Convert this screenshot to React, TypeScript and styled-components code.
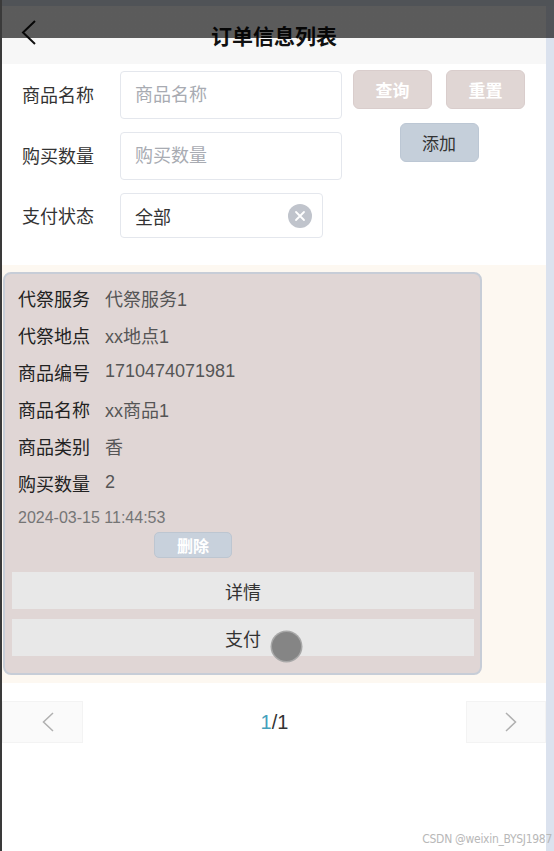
import React from "react";
import styled, { createGlobalStyle } from "styled-components";

const GlobalStyle = createGlobalStyle`
  html, body {
    margin: 0;
    padding: 0;
    background: #ffffff;
    overflow: hidden;
  }
  body {
    font-family: "Liberation Sans", "Noto Sans CJK SC", sans-serif;
    color: #333;
  }
  * { box-sizing: border-box; }
`;

const Frame = styled.div`
  position: relative;
  display: flex;
  width: 554px;
  height: 851px;
  border-left: 2px solid #3a3a3a;
`;

const Page = styled.div`
  flex: 1;
  display: flex;
  flex-direction: column;
  background: #ffffff;
`;

const SideStrip = styled.div`
  width: 8px;
  background: #dbe2ee;
`;

const TopShade = styled.div`
  position: absolute;
  left: 0;
  top: 0;
  width: 554px;
  height: 38px;
  background: linear-gradient(#505357 0, #505357 6px, rgba(0, 0, 0, 0.63) 6px);
  pointer-events: none;
  z-index: 5;
`;

const Header = styled.header`
  display: grid;
  grid-template-columns: 60px 1fr 60px;
  height: 64px;
  background: #f7f7f7;
`;

const BackButton = styled.button`
  border: 0;
  background: none;
  padding: 20px 0 0 19px;
  margin: 0;
  display: flex;
  align-items: flex-start;
  cursor: pointer;
`;

const Title = styled.h1`
  margin: 0;
  padding-top: 25px;
  text-align: center;
  font-size: 21px;
  line-height: 24px;
  font-weight: 700;
  color: #111;
`;

const Form = styled.section`
  display: flex;
  align-items: flex-start;
  padding: 6px 0 27px 20px;
`;

const Fields = styled.div`
  display: flex;
  flex-direction: column;
  gap: 13px;
`;

const FieldRow = styled.div<{ $top?: number }>`
  display: flex;
  align-items: center;
  padding-top: ${(p) => p.$top ?? 0}px;
`;

const FieldLabel = styled.label`
  width: 98px;
  font-size: 18px;
  color: #333;
  margin-top: -2px;
`;

const TextInput = styled.input`
  width: 222px;
  height: 48px;
  border: 1px solid #e4e7ed;
  border-radius: 4px;
  padding: 0 14px;
  font-size: 18px;
  font-family: "Liberation Sans", "Noto Sans CJK SC", sans-serif;
  color: #333;
  background: #fff;
  outline: none;
  &::placeholder {
    color: #a8abb2;
  }
`;

const SelectBox = styled.div`
  width: 203px;
  height: 45px;
  border: 1px solid #e4e7ed;
  border-radius: 4px;
  display: flex;
  align-items: center;
  justify-content: space-between;
  padding: 0 10px 0 14px;
  font-size: 18px;
  color: #333;
  background: #fff;
`;

const ClearIcon = styled.span`
  width: 24px;
  height: 24px;
  border-radius: 50%;
  background: #c0c4cc;
  display: flex;
  align-items: center;
  justify-content: center;
  margin-top: 1px;
`;

const Actions = styled.div`
  margin-left: 11px;
  display: flex;
  flex-direction: column;
  align-items: center;
  gap: 14px;
`;

const ActionPair = styled.div`
  display: flex;
  gap: 14px;
`;

const ActionButton = styled.button<{ $variant: "rose" | "blue" }>`
  width: 79px;
  height: 39px;
  border-radius: 6px;
  border: 1px solid ${(p) => (p.$variant === "rose" ? "#d9cdcc" : "#bcc7d4")};
  background: ${(p) => (p.$variant === "rose" ? "#e0d6d4" : "#c5cfda")};
  color: ${(p) => (p.$variant === "rose" ? "#ffffff" : "#333333")};
  font-size: 17px;
  font-weight: ${(p) => (p.$variant === "rose" ? 600 : 400)};
  font-family: "Liberation Sans", "Noto Sans CJK SC", sans-serif;
  padding: 0;
  cursor: pointer;
`;

const ListArea = styled.section`
  background: #fdf8f1;
  padding: 7px 0 8px 1px;
`;

const Card = styled.article`
  width: 479px;
  background: #e0d6d5;
  border: 2px solid #c7cdd7;
  border-radius: 8px;
  padding: 5px 6px 17px 7px;
  display: flex;
  flex-direction: column;
`;

const InfoRow = styled.div`
  display: flex;
  align-items: center;
  height: 37px;
  padding-left: 6px;
  font-size: 18px;
`;

const InfoLabel = styled.span`
  width: 72px;
  margin-right: 15px;
  color: #222;
  white-space: nowrap;
`;

const InfoValue = styled.span`
  color: #555;
`;

const DateLine = styled.div`
  height: 26px;
  margin-top: 4px;
  line-height: 26px;
  padding-left: 6px;
  font-size: 16px;
  color: #757575;
`;

const DeleteRow = styled.div`
  display: flex;
  padding-left: 142px;
  margin-top: 1px;
`;

const DeleteButton = styled.button`
  width: 78px;
  height: 26px;
  border-radius: 5px;
  border: 1px solid #bdc6d1;
  background: #c8d1dc;
  color: #fff;
  font-size: 16px;
  font-weight: 600;
  font-family: "Liberation Sans", "Noto Sans CJK SC", sans-serif;
  padding: 0;
`;

const WideButton = styled.button<{ $gap: number }>`
  margin-top: ${(p) => p.$gap}px;
  height: 37px;
  width: 100%;
  border: 0;
  background: #e8e8e8;
  color: #333;
  font-size: 18px;
  font-family: "Liberation Sans", "Noto Sans CJK SC", sans-serif;
  padding: 0;
`;

const Pager = styled.nav`
  margin-top: 18px;
  display: flex;
  align-items: center;
  justify-content: space-between;
  height: 42px;
`;

const PageButton = styled.button<{ $w: number }>`
  width: ${(p) => p.$w}px;
  height: 42px;
  border: 1px solid #f3f3f3;
  background: #fafafa;
  display: flex;
  align-items: center;
  justify-content: center;
  padding: 0 0 0 10px;
`;

const PageCount = styled.div`
  font-size: 20px;
  color: #333;
  font-family: "Liberation Sans", sans-serif;
`;

const Current = styled.span`
  color: #45a0bc;
`;

const Watermark = styled.div`
  position: absolute;
  right: 2px;
  bottom: 5px;
  font-size: 12px;
  color: #b8b8b8;
  font-family: "DejaVu Sans Condensed", "Liberation Sans", sans-serif;
  letter-spacing: -0.3px;
`;

const TouchDot = styled.div`
  position: absolute;
  left: 270px;
  top: 632px;
  width: 29px;
  height: 29px;
  border-radius: 50%;
  background: #858585;
  box-shadow: 0 0 0 1.5px #a8a8a8;
  z-index: 4;
`;

const info: [string, string][] = [
  ["代祭服务", "代祭服务1"],
  ["代祭地点", "xx地点1"],
  ["商品编号", "1710474071981"],
  ["商品名称", "xx商品1"],
  ["商品类别", "香"],
  ["购买数量", "2"],
];

export default function App() {
  return (
    <>
      <GlobalStyle />
      <Frame>
        <Page>
          <Header>
            <BackButton aria-label="返回">
              <svg width="16" height="25" viewBox="0 0 16 25">
                <polyline
                  points="14,1 2,12.5 14,24"
                  fill="none"
                  stroke="#111"
                  strokeWidth="2"
                />
              </svg>
            </BackButton>
            <Title>订单信息列表</Title>
            <div />
          </Header>

          <Form>
            <Fields>
              <FieldRow $top={1}>
                <FieldLabel>商品名称</FieldLabel>
                <TextInput placeholder="商品名称" />
              </FieldRow>
              <FieldRow>
                <FieldLabel>购买数量</FieldLabel>
                <TextInput placeholder="购买数量" />
              </FieldRow>
              <FieldRow>
                <FieldLabel>支付状态</FieldLabel>
                <SelectBox>
                  <span>全部</span>
                  <ClearIcon>
                    <svg width="12" height="12" viewBox="0 0 12 12">
                      <path
                        d="M2 2 L10 10 M10 2 L2 10"
                        stroke="#fff"
                        strokeWidth="1.8"
                        strokeLinecap="round"
                      />
                    </svg>
                  </ClearIcon>
                </SelectBox>
              </FieldRow>
            </Fields>
            <Actions>
              <ActionPair>
                <ActionButton $variant="rose">查询</ActionButton>
                <ActionButton $variant="rose">重置</ActionButton>
              </ActionPair>
              <ActionButton $variant="blue">添加</ActionButton>
            </Actions>
          </Form>

          <ListArea>
            <Card>
              {info.map(([k, v]) => (
                <InfoRow key={k}>
                  <InfoLabel>{k}</InfoLabel>
                  <InfoValue>{v}</InfoValue>
                </InfoRow>
              ))}
              <DateLine>2024-03-15 11:44:53</DateLine>
              <DeleteRow>
                <DeleteButton>删除</DeleteButton>
              </DeleteRow>
              <WideButton $gap={14}>详情</WideButton>
              <WideButton $gap={10}>支付</WideButton>
            </Card>
          </ListArea>

          <Pager>
            <PageButton $w={81} aria-label="上一页">
              <svg width="12" height="20" viewBox="0 0 12 20">
                <polyline points="11,1 1.5,10 11,19" fill="none" stroke="#b0b0b0" strokeWidth="1.5" />
              </svg>
            </PageButton>
            <PageCount>
              <Current>1</Current>/1
            </PageCount>
            <PageButton $w={80} aria-label="下一页">
              <svg width="12" height="20" viewBox="0 0 12 20">
                <polyline points="1,1 10.5,10 1,19" fill="none" stroke="#b0b0b0" strokeWidth="1.5" />
              </svg>
            </PageButton>
          </Pager>
        </Page>
        <SideStrip />
        <TopShade />
        <TouchDot />
        <Watermark>CSDN @weixin_BYSJ1987</Watermark>
      </Frame>
    </>
  );
}
